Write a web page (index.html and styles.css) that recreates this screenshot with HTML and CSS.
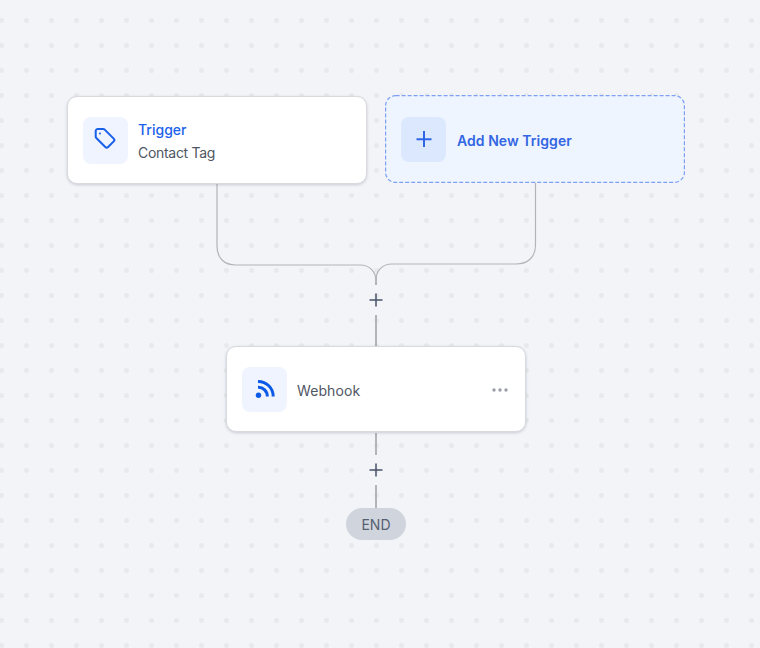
FILE: index.html
```html
<!DOCTYPE html>
<html lang="en">
<head>
<meta charset="utf-8">
<title>Workflow</title>
<link rel="stylesheet" href="styles.css">
</head>
<body>
<main class="canvas">
  <svg class="edges" width="760" height="648" viewBox="0 0 760 648" fill="none">
    <path class="edge" d="M217 184V246C217 258 224 265 236 265H360C370 265 376 272 376 281"/>
    <path class="edge" d="M535.500 183V245C535.500 257 528 264 516 264H392C382 264 376 271 376 280"/>
    <path class="edge-thick" d="M376 277V285M376 315V346M376 433V455M376 485V508"/>
  </svg>

  <section class="node trigger">
    <span class="tile tile-tall"><svg class="icon" width="24" height="24" viewBox="1 0.500 24 24" fill="none"><path d="M2.700 3.500a2 2 0 0 1 2-2h5.600a2 2 0 0 1 1.400.6l9 9a2 2 0 0 1 0 2.800l-5.600 5.600a2 2 0 0 1-2.800 0l-9-9a2 2 0 0 1-.6-1.400z"/><circle class="dot-fill" cx="7" cy="5.900" r="1"/></svg></span>
    <div class="labels">
      <div class="title">Trigger</div>
      <div class="sub">Contact Tag</div>
    </div>
  </section>

  <section class="node add">
    <svg class="dash" width="300" height="88" viewBox="0 0 300 88" fill="none"><rect x="0.600" y="0.600" width="298.800" height="86.800" rx="10"/></svg>
    <span class="tile tile-add"><svg class="icon-plus" width="20" height="20" viewBox="0 0 20 20" fill="none"><path d="M10 2V18M2.500 10.200H17.500"/></svg></span>
    <div class="add-label">Add New Trigger</div>
  </section>

  <svg class="plus plus-a" width="16" height="16" viewBox="0 0 16 16" fill="none"><path d="M8 1.500V14.500M1.500 8H14.500"/></svg>

  <section class="node webhook">
    <span class="tile"><svg class="icon-rss" width="24" height="24" viewBox="0 0 24 24" fill="none"><path d="M5 4.400A15 15 0 0 1 20.200 19.500M5 10.200A9 9 0 0 1 14.300 19.500"/><circle class="rss-dot" cx="5.500" cy="18.300" r="2.700"/></svg></span>
    <div class="hook-label">Webhook</div>
    <svg class="more" width="18" height="4" viewBox="0 0 18 4"><circle cx="3" cy="2" r="1.700"/><circle cx="9" cy="2" r="1.700"/><circle cx="15" cy="2" r="1.700"/></svg>
  </section>

  <svg class="plus plus-b" width="16" height="16" viewBox="0 0 16 16" fill="none"><path d="M8 1.500V14.500M1.500 8H14.500"/></svg>

  <div class="end">END</div>
</main>
</body>
</html>
```
FILE: styles.css
```css
* { box-sizing: border-box; }
html, body { margin: 0; padding: 0; }
body { width: 760px; height: 648px; overflow: hidden; font-family: Inter, "Noto Sans", sans-serif; }

.canvas {
  position: relative;
  width: 760px;
  height: 648px;
  background-color: #f3f4f8;
  background-image: radial-gradient(circle at center, #e8e9ec 0, #e8e9ec 2px, rgba(232,233,236,0) 3px);
  background-size: 25px 25px;
  background-position: -11px 8px;
}

.edges { position: absolute; left: 0; top: 0; }
.edge { stroke: #b2b4b8; stroke-width: 1.200; }
.edge-thick { stroke: #b2b4b8; stroke-width: 2; }

.node {
  position: absolute;
  width: 300px;
  display: flex;
  align-items: center;
  padding-left: 15px;
  border-radius: 10px;
}
.trigger, .webhook {
  background: #fff;
  border: 1px solid #d8dade;
  box-shadow: 0 1px 3px rgba(60, 64, 80, .22);
}
.trigger { left: 67px; top: 96px; height: 88px; gap: 10px; }
.webhook { left: 226px; top: 346px; height: 86px; gap: 10px; padding-right: 16px; }
.add {
  left: 385px; top: 95px; height: 88px; gap: 11px;
  padding-left: 16px;
  background: #eff5ff;
}
.dash { position: absolute; left: 0; top: 0; }
.dash rect { stroke: #7f9ff5; stroke-width: 1.200; stroke-dasharray: 4 2; }

.tile {
  flex: none;
  width: 45px;
  height: 45px;
  display: flex;
  align-items: center;
  justify-content: center;
  background: #eff4ff;
  border-radius: 8px;
}
.tile-tall { height: 47px; }
.tile-add { background: #dbe8fe; position: relative; }

.icon path { stroke: #1a5fe8; stroke-width: 2; stroke-linejoin: round; }
.dot-fill { fill: #1a5fe8; }
.icon-plus path { stroke: #2f66e6; stroke-width: 2; }
.icon-rss path { stroke: #0b5be8; stroke-width: 3; }
.rss-dot { fill: #0b5be8; }

.labels { display: flex; flex-direction: column; gap: 3px; margin-top: 3px; }
.title { font-size: 14px; line-height: 20px; font-weight: 500; color: #1c62ea; }
.sub { font-size: 14px; line-height: 20px; color: #4f5663; letter-spacing: -0.3px; }
.add-label { font-size: 14px; font-weight: 600; line-height: 20px; color: #3366e2; margin-top: 4px; letter-spacing: 0.05px; position: relative; }
.hook-label { flex: 1; font-size: 14px; line-height: 20px; color: #4f5663; margin-top: 4px; letter-spacing: 0.1px; }
.more { fill: #9a9ea6; margin-top: 1px; }

.plus { position: absolute; }
.plus path { stroke: #475467; stroke-width: 1.500; }
.plus-a { left: 368px; top: 292px; }
.plus-b { left: 368px; top: 462px; }

.end {
  position: absolute;
  left: 346px; top: 508px;
  width: 60px; height: 32px;
  border-radius: 16px;
  background: #d0d4dc;
  color: #566072;
  font-size: 14px;
  display: flex;
  align-items: center;
  justify-content: center;
}
```
